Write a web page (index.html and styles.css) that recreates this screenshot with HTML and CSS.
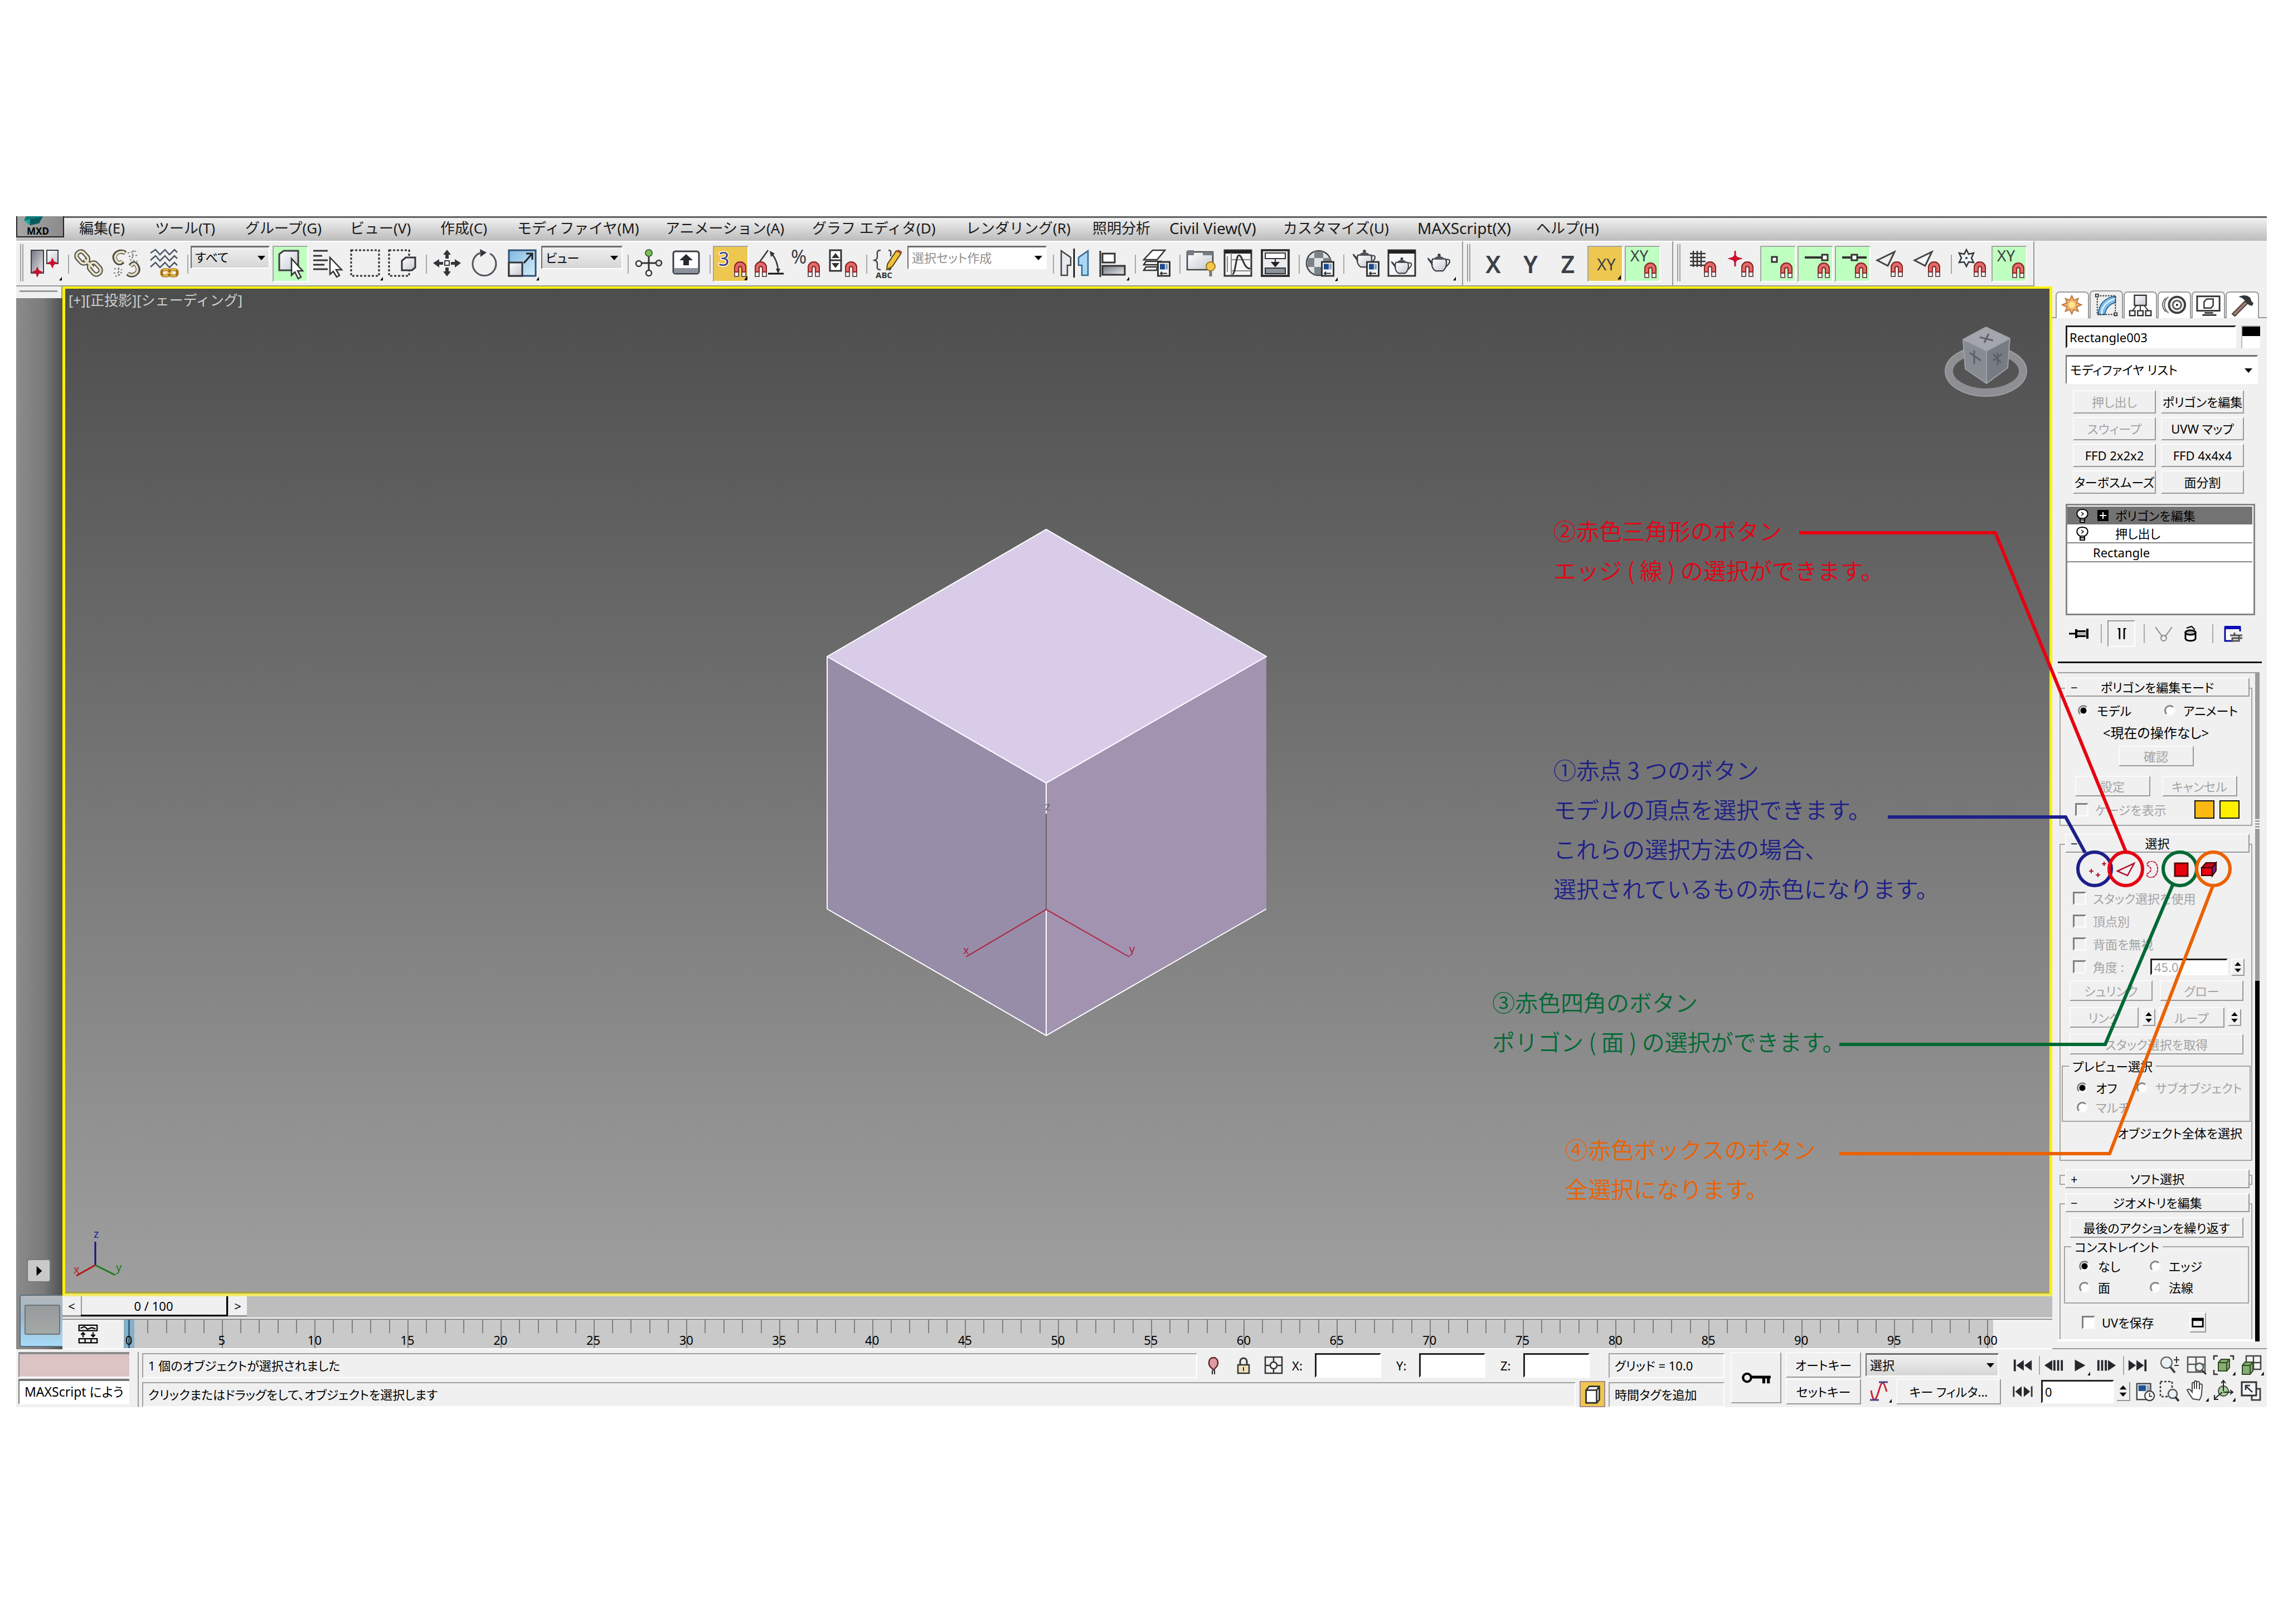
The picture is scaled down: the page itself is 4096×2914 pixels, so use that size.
FILE: index.html
```html
<!DOCTYPE html>
<html lang="ja">
<head>
<meta charset="utf-8">
<title>MXD</title>
<link rel="stylesheet" href="styles.css">
</head>
<body>
<svg class="defs" aria-hidden="true">
  <defs>
    <linearGradient id="gSteel" x1="0" y1="0" x2="1" y2="1"><stop offset="0" stop-color="#6f747c"/><stop offset="1" stop-color="#e8eaee"/></linearGradient>
    <linearGradient id="gPale" x1="0" y1="0" x2="1" y2="1"><stop offset="0" stop-color="#fff"/><stop offset="1" stop-color="#c3c8d0"/></linearGradient>
    <linearGradient id="gBlue" x1="0" y1="0" x2="1" y2="1"><stop offset="0" stop-color="#7fb8e0"/><stop offset="1" stop-color="#d6edfb"/></linearGradient>
    <symbol id="magnet" viewBox="0 0 24 28"><path d="M2 27V11a10 10 0 0 1 20 0V27H15V12a3 3 0 0 0-6 0V27Z" fill="#fff" stroke="#6a5a5a" stroke-width="2"/><path d="M2 19V11a10 10 0 0 1 20 0v8H15V12a3 3 0 0 0-6 0v7Z" fill="#e26a6a" stroke="#8a2424" stroke-width="2"/></symbol>
    <symbol id="fly" viewBox="0 0 6 8"><path d="M6 0V8H0Z" fill="#000"/></symbol>
    <symbol id="teapot" viewBox="0 0 50 38"><path d="M12 12H38C42 22 38 32 32 36H18C11 32 8 22 12 12Z" fill="url(#gPale)" stroke="#3c3f44" stroke-width="2.5"/><path d="M12 20L2 10M12 24L3 12M38 14C48 10 50 18 38 28" fill="none" stroke="#3c3f44" stroke-width="2.5"/><path d="M15 11C20 5 30 5 35 11Z" fill="#4a4e55"/><circle cx="25" cy="4" r="3" fill="#3c3f44"/></symbol>
    <symbol id="sheet" viewBox="0 0 24 28"><rect x="1.500" y="1.500" width="21" height="25" fill="#f4f7fa" stroke="#333" stroke-width="3"/><rect x="5" y="5" width="9" height="10" fill="#1d4c8c"/><rect x="15" y="5" width="4" height="10" fill="#8aa0bb"/><path d="M6 22h12M9 19l-3 3 3 3" stroke="#333" stroke-width="2" fill="none"/></symbol>
    <symbol id="bulb" viewBox="0 0 24 30"><path d="M8 20C-1 15 1 4 12 4S25 15 16 20Z" fill="#fff" stroke="#000" stroke-width="2"/><path d="M8 20h8v7H8ZM8 23h8" fill="#fff" stroke="#000" stroke-width="2"/><path d="M10 9l4 3-4 3" fill="none" stroke="#000" stroke-width="1.500"/></symbol>
    <symbol id="updown" viewBox="0 0 24 30"><path d="M12 4L19 12H5ZM12 26L19 18H5Z" fill="#000"/></symbol>
  </defs>
</svg>

<main class="app">
  <header class="menubar">
    <button class="logo" type="button"><svg viewBox="0 0 44 20"><path d="M4 0H38L30 14 12 18 0 8Z" fill="#0d7a78"/><path d="M12 6L36 2 30 14 12 18Z" fill="#075a5c"/><path d="M0 8L12 6V18Z" fill="#1ba39c"/></svg><span>MXD</span></button>
    <nav class="menus">
      <a href="#">編集(E)</a><a href="#">ツール(T)</a><a href="#">グループ(G)</a><a href="#">ビュー(V)</a><a href="#">作成(C)</a><a href="#">モディファイヤ(M)</a><a href="#">アニメーション(A)</a><a href="#">グラフ エディタ(D)</a><a href="#">レンダリング(R)</a><a href="#">照明分析</a><a href="#" class="latin">Civil View(V)</a><a href="#">カスタマイズ(U)</a><a href="#" class="latin">MAXScript(X)</a><a href="#">ヘルプ(H)</a>
    </nav>
  </header>

  <div class="toolbars">
    <section class="bar bar-main">
      <i class="grip"></i>
      <button class="tool" type="button" aria-label="整列"><svg viewBox="0 0 64 64"><rect x="8" y="7" width="22" height="41" fill="url(#gSteel)" stroke="#3c3f44" stroke-width="2"/><rect x="36" y="7" width="20" height="24" fill="url(#gPale)" stroke="#3c3f44" stroke-width="2"/><path d="M19 36l3 7 7 3-7 3-3 7-3-7-7-3 7-3ZM46 20l3 7 7 3-7 3-3 7-3-7-7-3 7-3Z" fill="#c8102e"/><use href="#fly" x="58" y="54" width="5" height="8"/></svg></button>
      <i class="sep"></i>
      <button class="tool" type="button" aria-label="リンク"><svg viewBox="0 0 64 64"><g fill="none"><g stroke="#4b4a42" stroke-width="8"><rect x="12" y="9" width="15" height="23" rx="7" transform="rotate(-42 19 20)"/><rect x="35" y="28" width="15" height="23" rx="7" transform="rotate(-42 43 40)"/><path d="M23 23L39 38"/></g><g stroke="#e8e2c8" stroke-width="4"><rect x="12" y="9" width="15" height="23" rx="7" transform="rotate(-42 19 20)"/><rect x="35" y="28" width="15" height="23" rx="7" transform="rotate(-42 43 40)"/><path d="M23 23L39 38"/></g></g></svg></button>
      <button class="tool" type="button" aria-label="リンク解除"><svg viewBox="0 0 64 64"><g fill="none"><path d="M30 12C22 6 8 12 11 22S22 31 25 27M34 49C42 56 56 48 52 38S43 30 39 35" stroke="#4b4a42" stroke-width="8"/><path d="M29 12C22 7 9 13 12 22S21 30 24 27M35 49C42 55 55 48 51 38S43 31 40 35" stroke="#e8e2c8" stroke-width="4"/><path d="M34 12l18-4M36 18l18-2M38 24l14 3M44 7l-2 18M10 40l14 2M9 48l16-1M12 54l10-4M18 38v16" stroke="#777" stroke-width="2" stroke-dasharray="3 3"/></g></svg></button>
      <button class="tool" type="button" aria-label="スペースワープ"><svg viewBox="0 0 64 64"><path d="M8 12l9-6 8 9 9-9 8 9 9-9 5 5M8 25l9-8 8 9 9-9 8 9 9-9 5 5M8 37l9-8 8 9 9-9 8 9 9-9 5 5" fill="none" stroke="#4a5568" stroke-width="2.500"/><rect x="28" y="42" width="14" height="11" rx="4" fill="none" stroke="#a87412" stroke-width="5"/><rect x="42" y="42" width="14" height="11" rx="4" fill="none" stroke="#a87412" stroke-width="5"/><path d="M30 42h10M44 42h10M30 53h10M44 53h10M36 48h12" stroke="#f3c64b" stroke-width="2"/></svg></button>
      <i class="sep"></i>
      <span class="pick w-filter"><select aria-label="選択フィルタ"><option>すべて</option></select></span>
      <button class="tool on" type="button" aria-label="選択"><svg viewBox="0 0 64 64"><path d="M12 14L20 8H46V38L40 43H12Z" fill="url(#gPale)" stroke="#3c3f44" stroke-width="3"/><path d="M34 22V52L40 46 46 58 51 55 45 44H54Z" fill="#fff" stroke="#333" stroke-width="2.500"/></svg></button>
      <button class="tool" type="button" aria-label="名前による選択"><svg viewBox="0 0 64 64"><path d="M6 8h26M6 17h16M6 25h26M6 33h20M6 41h26" stroke="#333" stroke-width="3"/><path d="M36 20V50L42 45 48 55 53 52 47 42H57Z" fill="#fff" stroke="#333" stroke-width="2.500"/></svg></button>
      <button class="tool" type="button" aria-label="矩形選択"><svg viewBox="0 0 64 64"><rect x="7" y="7" width="50" height="46" fill="none" stroke="#333" stroke-width="3" stroke-dasharray="4 3"/><use href="#fly" x="59" y="54" width="5" height="8"/></svg></button>
      <button class="tool" type="button" aria-label="交差"><svg viewBox="0 0 64 64"><rect x="8" y="7" width="36" height="46" fill="none" stroke="#333" stroke-width="3" stroke-dasharray="4 3"/><path d="M31 26L38 20H55V38L49 43H31Z" fill="url(#gPale)" stroke="#333" stroke-width="3"/></svg></button>
      <i class="sep"></i>
      <button class="tool" type="button" aria-label="移動"><svg viewBox="0 0 64 64"><path d="M32 6l7 9h-4v7h-6v-7h-4ZM32 54l7-9h-4v-7h-6v7h-4ZM7 30l11-7v5h7v5h-7v5ZM57 30l-11-7v5h-7v5h7v5Z" fill="#33363b"/><rect x="28" y="26" width="8" height="8" fill="#fff" stroke="#33363b" stroke-width="2"/></svg></button>
      <button class="tool" type="button" aria-label="回転"><svg viewBox="0 0 64 64"><path d="M42 13A21 21 0 1 1 24 12" fill="none" stroke="#50555c" stroke-width="3"/><path d="M24 5L36 11 25 19Z" fill="#33363b"/></svg></button>
      <button class="tool" type="button" aria-label="スケール"><svg viewBox="0 0 64 64"><rect x="9" y="7" width="48" height="46" fill="url(#gBlue)" stroke="#2d4f74" stroke-width="3"/><rect x="9" y="29" width="24" height="24" fill="url(#gPale)" stroke="#333" stroke-width="3"/><path d="M36 30L50 14M40 13H51V24" fill="none" stroke="#222" stroke-width="3"/><use href="#fly" x="58" y="54" width="5" height="8"/></svg></button>
      <span class="pick w-coord"><select aria-label="参照座標系"><option>ビュー</option></select></span>
      <i class="sep"></i>
      <button class="tool" type="button" aria-label="基点"><svg viewBox="0 0 64 64"><path d="M32 12V50M12 30H52" stroke="#333" stroke-width="3"/><circle cx="32" cy="12" r="6" fill="#7bbf5a" stroke="#3c6b2c" stroke-width="2"/><circle cx="14" cy="31" r="5" fill="#fff" stroke="#333" stroke-width="2.500"/><circle cx="50" cy="30" r="5" fill="#dfe3e8" stroke="#333" stroke-width="2.500"/><circle cx="32" cy="48" r="5" fill="#fff" stroke="#333" stroke-width="2.500"/></svg></button>
      <button class="tool" type="button" aria-label="キーボード"><svg viewBox="0 0 64 64"><rect x="9" y="9" width="46" height="40" rx="4" fill="#fff" stroke="#3c3f44" stroke-width="3"/><rect x="10" y="39" width="44" height="9" fill="#8d939c"/><path d="M32 14L44 25H37V34H27V25H20Z" fill="#26292e"/></svg></button>
      <i class="sep"></i>
      <button class="tool on-amber" type="button" aria-label="スナップ"><svg viewBox="0 0 64 64"><text x="10" y="35" class="glyph glyph-halo">3</text><use href="#magnet" x="37" y="27" width="24" height="28"/><use href="#fly" x="56" y="52" width="6" height="9"/></svg></button>
      <button class="tool" type="button" aria-label="角度スナップ"><svg viewBox="0 0 64 64"><path d="M14 32L32 7M36 11C46 20 50 34 50 46" fill="none" stroke="#333" stroke-width="2.500"/><path d="M35 8l9 5-7 6ZM50 49l-4-9h8Z" fill="#333"/><path d="M32 49H60" stroke="#111" stroke-width="3"/><use href="#magnet" x="7" y="27" width="24" height="28"/></svg></button>
      <button class="tool" type="button" aria-label="パーセントスナップ"><svg viewBox="0 0 64 64"><text x="6" y="31" class="glyph">%</text><use href="#magnet" x="35" y="27" width="24" height="28"/></svg></button>
      <button class="tool" type="button" aria-label="スピナースナップ"><svg viewBox="0 0 64 64"><path d="M9 7H29V44H9ZM9 25H29" fill="#fff" stroke="#333" stroke-width="3"/><path d="M19 12L26 21H12ZM19 39L26 30H12Z" fill="#333"/><use href="#magnet" x="35" y="27" width="24" height="28"/></svg></button>
      <i class="sep"></i>
      <button class="tool" type="button" aria-label="選択セット編集"><svg viewBox="0 0 64 64"><path d="M20 7C12 7 14 12 14 18 14 23 12 24 9 25 12 26 14 27 14 32 14 38 12 42 20 42M34 7C40 7 38 12 38 18M38 30C38 38 40 42 34 42" fill="none" stroke="#444" stroke-width="2.500"/><path d="M32 32L48 8 57 12 41 36 31 42Z" fill="#f0c23c" stroke="#5c4310" stroke-width="2"/><path d="M48 8L52 6 58 9 57 12Z" fill="#b44"/><text x="11" y="57" class="glyph-abc">ABC</text></svg></button>
      <span class="pick w-sets light"><select aria-label="名前付き選択セット"><option>選択セット作成</option></select></span>
      <i class="sep"></i>
      <button class="tool" type="button" aria-label="ミラー"><svg viewBox="0 0 64 64"><path d="M9 8L26 20V34H20V52H9Z" fill="#e6eaef" stroke="#444" stroke-width="2.500"/><path d="M32 4V56" stroke="#000" stroke-width="2.500"/><path d="M57 8L40 20V34H46V52H57Z" fill="#a9d6f2" stroke="#336a94" stroke-width="2.500"/></svg></button>
      <button class="tool" type="button" aria-label="位置合わせ"><svg viewBox="0 0 64 64"><path d="M12 8V55" stroke="#333" stroke-width="3"/><rect x="16" y="13" width="22" height="16" fill="#fff" stroke="#333" stroke-width="3"/><rect x="16" y="35" width="40" height="16" fill="url(#gSteel)" stroke="#333" stroke-width="3"/><use href="#fly" x="59" y="54" width="5" height="8"/></svg></button>
      <i class="sep"></i>
      <button class="tool" type="button" aria-label="レイヤ"><svg viewBox="0 0 64 64"><path d="M10 24L26 7H48L34 24ZM10 33L14 27H40L34 33ZM10 43L14 37H36L32 43Z" fill="#fff" stroke="#333" stroke-width="2.500"/><use href="#sheet" x="34" y="26" width="24" height="29"/></svg></button>
      <i class="sep"></i>
      <button class="tool" type="button" aria-label="グラファイト"><svg viewBox="0 0 64 64"><rect x="8" y="10" width="46" height="32" fill="url(#gPale)" stroke="#444" stroke-width="2.500"/><path d="M8 7H20V16H8ZM36 10H54V16H36Z" fill="#777c84"/><circle cx="50" cy="36" r="8" fill="#f2c84c" stroke="#a5781a" stroke-width="2"/><path d="M50 44V54" stroke="#777" stroke-width="5"/></svg></button>
      <button class="tool" type="button" aria-label="カーブエディタ"><svg viewBox="0 0 64 64"><rect x="8" y="7" width="48" height="46" fill="#f4f5f7" stroke="#333" stroke-width="3"/><path d="M8 10H56" stroke="#222" stroke-width="6"/><path d="M20 12V52M20 24H56M20 44H56M13 18v28" stroke="#888" stroke-width="2"/><path d="M22 50C28 50 28 16 34 16S42 40 54 40" fill="none" stroke="#333" stroke-width="3"/></svg></button>
      <button class="tool" type="button" aria-label="スケマティック"><svg viewBox="0 0 64 64"><rect x="8" y="7" width="48" height="46" fill="#e9ebee" stroke="#333" stroke-width="4"/><rect x="14" y="12" width="36" height="10" fill="#fff" stroke="#333" stroke-width="2"/><rect x="14" y="39" width="36" height="10" fill="#8d939c" stroke="#333" stroke-width="2"/><path d="M32 22V30M26 29H38L32 36Z" fill="#222" stroke="#222" stroke-width="2"/></svg></button>
      <i class="sep"></i>
      <button class="tool" type="button" aria-label="マテリアル"><svg viewBox="0 0 64 64"><circle cx="30" cy="30" r="22" fill="#dfe2e6" stroke="#444" stroke-width="2.500"/><path d="M22 9H38V21H22ZM10 21H22V37H10ZM38 21H51V37H38ZM22 37H38V51H22Z" fill="#7c828a"/><use href="#sheet" x="34" y="26" width="24" height="29"/><use href="#fly" x="59" y="55" width="5" height="8"/></svg></button>
      <i class="sep"></i>
      <button class="tool" type="button" aria-label="レンダリング設定"><svg viewBox="0 0 64 64"><use href="#teapot" x="7" y="5" width="50" height="34"/><use href="#sheet" x="35" y="26" width="24" height="29"/></svg></button>
      <button class="tool" type="button" aria-label="レンダリングフレーム"><svg viewBox="0 0 64 64"><rect x="8" y="7" width="48" height="46" fill="#f4f5f7" stroke="#333" stroke-width="3"/><path d="M8 10H56" stroke="#222" stroke-width="6"/><use href="#teapot" x="11" y="19" width="42" height="31"/></svg></button>
      <button class="tool" type="button" aria-label="レンダリング"><svg viewBox="0 0 64 64"><use href="#teapot" x="8" y="12" width="48" height="34"/><use href="#fly" x="57" y="54" width="5" height="8"/></svg></button>
    </section>
    <section class="bar bar-axis">
      <i class="grip"></i>
      <button class="tool axis" type="button">X</button>
      <button class="tool axis" type="button">Y</button>
      <button class="tool axis" type="button">Z</button>
      <button class="tool on-amber" type="button"><span class="xy">XY</span><svg class="corner" viewBox="0 0 6 8"><path d="M6 0V8H0Z"/></svg></button>
      <button class="tool on" type="button" aria-label="XY スナップ"><svg viewBox="0 0 64 64"><text x="10" y="27" class="glyph-xy">XY</text><use href="#magnet" x="34" y="29" width="24" height="28"/></svg></button>
    </section>
    <section class="bar">
      <i class="grip"></i>
      <button class="tool" type="button" aria-label="グリッド"><svg viewBox="0 0 64 64"><path d="M14 8V37M21 8V37M28 8V37M8 13H36M8 20H36M8 27H36M8 34H34" stroke="#333" stroke-width="2.500"/><use href="#magnet" x="32" y="27" width="24" height="28"/></svg></button>
      <button class="tool" type="button" aria-label="基点スナップ"><svg viewBox="0 0 64 64"><path d="M22 8V36" stroke="#c8102e" stroke-width="3"/><path d="M22 14l4 5 10 3-10 3-4 5-4-5-10-3 10-3Z" fill="#c8102e"/><use href="#magnet" x="32" y="27" width="24" height="28"/></svg></button>
      <button class="tool on" type="button" aria-label="頂点"><svg viewBox="0 0 64 64"><rect x="21" y="19" width="9" height="9" fill="#fff" stroke="#333" stroke-width="3"/><use href="#magnet" x="35" y="29" width="24" height="28"/></svg></button>
      <button class="tool on" type="button" aria-label="端点"><svg viewBox="0 0 64 64"><path d="M13 20H44" stroke="#333" stroke-width="4"/><rect x="44" y="15" width="10" height="10" fill="#fff" stroke="#333" stroke-width="3"/><use href="#magnet" x="35" y="29" width="24" height="28"/></svg></button>
      <button class="tool on" type="button" aria-label="中点"><svg viewBox="0 0 64 64"><path d="M13 20H57" stroke="#333" stroke-width="4"/><rect x="30" y="15" width="10" height="10" fill="#fff" stroke="#333" stroke-width="3"/><use href="#magnet" x="35" y="29" width="24" height="28"/></svg></button>
      <button class="tool" type="button" aria-label="エッジ"><svg viewBox="0 0 64 64"><path d="M9 25L40 10 28 35Z" fill="none" stroke="#444" stroke-width="3"/><use href="#magnet" x="32" y="27" width="24" height="28"/></svg></button>
      <button class="tool" type="button" aria-label="面"><svg viewBox="0 0 64 64"><path d="M9 25L40 10 28 35Z" fill="#f6f7f9" stroke="#444" stroke-width="3"/><use href="#magnet" x="32" y="27" width="24" height="28"/></svg></button>
      <i class="sep"></i>
      <button class="tool" type="button" aria-label="フリーズ"><svg viewBox="0 0 64 64"><path d="M22 6l4 8 9-2-4 9 4 8-9-1-4 8-4-8-9 1 4-8-4-9 9 2Z" fill="#eef3f8" stroke="#333" stroke-width="2.500"/><circle cx="22" cy="21" r="2" fill="#333"/><use href="#magnet" x="34" y="27" width="24" height="28"/></svg></button>
      <button class="tool on" type="button" aria-label="XY 拘束"><svg viewBox="0 0 64 64"><text x="10" y="27" class="glyph-xy">XY</text><use href="#magnet" x="36" y="29" width="24" height="28"/></svg></button>
    </section>
  </div>

  <div class="workspace">
    <aside class="rail">
      <div class="rail-head"></div>
      <button class="rail-play" type="button" aria-label="展開"><svg viewBox="0 0 40 40"><path d="M16 11L26 20 16 29Z" fill="#000"/></svg></button>
      <div class="rail-tab"><span></span></div>
    </aside>

    <div class="stage">
      <section class="viewport">
        <p class="vp-label">[+][正投影][シェーディング]</p>
        <svg class="scene" viewBox="117 518 3560 1801" aria-hidden="true">
          <path d="M1877 949L2272 1177 1877 1404 1484 1177Z" fill="#d9cce9"/>
          <path d="M1484 1177L1877 1404V1857L1484 1630Z" fill="#978da9"/>
          <path d="M2272 1177L1877 1404V1857L2272 1630Z" fill="#a293b1"/>
          <path d="M1484 1630V1177L1877 949 2272 1177 1877 1404 1484 1177M1484 1630L1877 1857 2272 1630M1877 1404V1459M1877 1632V1857" fill="none" stroke="#fff" stroke-width="2"/>
          <path d="M1877 1459V1632" stroke="#666" stroke-width="2"/>
          <path d="M1733 1716L1877 1631 2026 1716" fill="none" stroke="#b0203c" stroke-width="2"/>
          <text x="1728" y="1711" class="ax" fill="#b0203c">x</text><text x="2026" y="1709" class="ax" fill="#b0203c">y</text><text x="1875" y="1453" class="ax" fill="#666">z</text>
          <path d="M171 2269V2227" stroke="#10108a" stroke-width="3"/><path d="M171 2269L137 2288" stroke="#b01818" stroke-width="3"/><path d="M171 2269L207 2287" stroke="#1d7a1d" stroke-width="3"/>
          <text x="168" y="2220" class="ax" fill="#1a1aaa">z</text><text x="132" y="2284" class="ax" fill="#c02020">x</text><text x="208" y="2280" class="ax" fill="#1d7a1d">y</text>
          <ellipse cx="3563" cy="665" rx="66" ry="38" fill="none" stroke="#8d8f92" stroke-width="14"/>
          <ellipse cx="3563" cy="665" rx="73" ry="45" fill="none" stroke="#9c9ea1" stroke-width="2"/>
          <path d="M3563 586L3606 606 3564 629 3522 608Z" fill="#a3a7ad"/><path d="M3522 608L3564 629V687L3526 661Z" fill="#878b92"/><path d="M3606 606L3564 629V687L3602 659Z" fill="#777b82"/>
          <path d="M3563 586L3606 606 3602 659 3564 687 3526 661 3522 608ZM3522 608L3564 629 3606 606M3564 629V687" fill="none" stroke="#9da1a7" stroke-width="2"/>
          <path d="M3552 604l24 6M3568 598l-8 16M3534 632l20 14M3542 628v24M3576 646l16-12M3584 632v22M3576 634l14 16" stroke="#5d6168" stroke-width="3"/>
        </svg>
      </section>
      <div class="slider"><button type="button">&lt;</button><button class="thumb" type="button">0 / 100</button><button type="button">&gt;</button></div>
      <div class="timeline">
        <button class="curve-btn" type="button" aria-label="ミニカーブエディタ"><svg viewBox="0 0 40 40"><path d="M2 2H38V13H2ZM2 29H38V37H2ZM14 29V37M26 29V37M5 8l8-3 6 5 8-3 8 2M10 26V18M6 21l4-4 4 4M30 16V25M26 21l4 4 4-4" fill="none" stroke="#000" stroke-width="2.500"/></svg></button>
        <ol class="ruler"><li class="now"><span>0</span></li><li><span>5</span></li><li><span>10</span></li><li><span>15</span></li><li><span>20</span></li><li><span>25</span></li><li><span>30</span></li><li><span>35</span></li><li><span>40</span></li><li><span>45</span></li><li><span>50</span></li><li><span>55</span></li><li><span>60</span></li><li><span>65</span></li><li><span>70</span></li><li><span>75</span></li><li><span>80</span></li><li><span>85</span></li><li><span>90</span></li><li><span>95</span></li><li class="last"><span>100</span></li></ol>
      </div>
    </div>

    <aside class="panel">
      <div class="tabs">
        <button type="button" aria-label="作成"><svg viewBox="0 0 60 48"><path d="M28 6l4 8 8-3-3 8 9 4-9 4 3 8-8-3-4 8-4-8-8 3 3-8-9-4 9-4-3-8 8 3Z" fill="#f0b070" stroke="#b8783e" stroke-width="2"/><circle cx="28" cy="23" r="6" fill="#ffe98a"/></svg></button>
        <button type="button" class="current" aria-label="修正"><svg viewBox="0 0 60 48"><path d="M14 42C14 24 26 10 46 8V20C36 22 28 30 26 42Z" fill="#7cbcea" stroke="#2f6796" stroke-width="2"/><path d="M20 42C20 28 30 16 46 13" fill="none" stroke="#dff1fd" stroke-width="3"/><path d="M12 7H46V42H12Z" fill="none" stroke="#333" stroke-width="2" stroke-dasharray="3 2"/><path d="M9 4h5v5H9ZM44 39h5v5h-5Z" fill="#fff" stroke="#333" stroke-width="2"/></svg></button>
        <button type="button" aria-label="階層"><svg viewBox="0 0 60 48"><rect x="18" y="5" width="22" height="19" fill="url(#gPale)" stroke="#333" stroke-width="2.500"/><path d="M29 24V34M22 24L14 34M36 24L44 34" stroke="#333" stroke-width="2"/><path d="M9 34h10v9H9ZM24 34h10v9H24ZM39 34h10v9H39Z" fill="#fff" stroke="#333" stroke-width="2.500"/></svg></button>
        <button type="button" aria-label="モーション"><svg viewBox="0 0 60 48"><circle cx="34" cy="23" r="15" fill="#eee" stroke="#3a3d42" stroke-width="4"/><circle cx="34" cy="23" r="8" fill="#fff" stroke="#555" stroke-width="3"/><circle cx="34" cy="23" r="2"/><path d="M18 8C8 16 8 30 18 38M13 10C5 18 5 28 13 36" fill="none" stroke="#666" stroke-width="2"/></svg></button>
        <button type="button" aria-label="表示"><svg viewBox="0 0 60 48"><rect x="8" y="7" width="42" height="27" fill="#fff" stroke="#333" stroke-width="3"/><path d="M21 17l5-5h12v12l-4 5H21Z" fill="#fff" stroke="#333" stroke-width="2.500"/><path d="M22 38H38M18 42H44" stroke="#333" stroke-width="3"/></svg></button>
        <button type="button" aria-label="ユーティリティ"><svg viewBox="0 0 60 48"><path d="M10 40L34 16 39 20 15 44Z" fill="#a07c74" stroke="#4b3a36" stroke-width="2"/><path d="M22 8C30 4 38 4 44 10L46 16 50 20 47 25 41 23 34 15C30 11 28 9 22 8Z" fill="#33363b"/></svg></button>
      </div>

      <div class="name-row"><input type="text" value="Rectangle003" aria-label="オブジェクト名"><button class="swatch-name" type="button" aria-label="カラー"></button></div>
      <span class="pick w-mod"><select aria-label="モディファイヤ"><option>モディファイヤ リスト</option></select></span>
      <div class="mods">
        <button type="button" disabled>押し出し</button><button type="button">ポリゴンを編集</button>
        <button type="button" disabled>スウィープ</button><button type="button">UVW マップ</button>
        <button type="button">FFD 2x2x2</button><button type="button">FFD 4x4x4</button>
        <button type="button">ターボスムーズ</button><button type="button">面分割</button>
      </div>
      <ul class="stack">
        <li class="sel"><svg class="lamp"><use href="#bulb"/></svg><svg class="plus" viewBox="0 0 20 20"><rect width="20" height="20"/><path d="M4 10H16M10 4V16" stroke="#fff" stroke-width="2"/></svg><span>ポリゴンを編集</span></li>
        <li><svg class="lamp"><use href="#bulb"/></svg><i class="plus"></i><span>押し出し</span></li>
        <li class="base"><span>Rectangle</span></li>
      </ul>
      <div class="stack-tools">
        <button type="button" aria-label="ピン"><svg viewBox="0 0 48 48"><path d="M6 24H18" stroke="#000" stroke-width="3"/><path d="M19 16V32M20 20H36M20 28H36M39 15V33" stroke="#000" stroke-width="4"/><path d="M21 21H37V27H21Z" fill="#bbb"/></svg></button>
        <i></i>
        <button type="button" class="pressed" aria-label="最終結果"><svg viewBox="0 0 48 48"><path d="M16 13h6v22h-3V17ZM34 13h-6v22h3V17Z" fill="#000"/></svg></button>
        <i></i>
        <button type="button" aria-label="個別化"><svg viewBox="0 0 48 48"><path d="M9 12L22 30M39 12L26 30" stroke="#888" stroke-width="2"/><circle cx="24" cy="32" r="5" fill="none" stroke="#888" stroke-width="2"/></svg></button>
        <button type="button" aria-label="削除"><svg viewBox="0 0 48 48"><path d="M15 22V33C17 38 31 38 33 33V22Z" fill="#fff" stroke="#000" stroke-width="3"/><ellipse cx="24" cy="22" rx="9" ry="4" fill="#bbb" stroke="#000" stroke-width="3"/><path d="M17 14l9-3 6 6" fill="none" stroke="#000" stroke-width="2"/></svg></button>
        <i></i>
        <button type="button" aria-label="構成"><svg viewBox="0 0 48 48"><path d="M11 12H38V20M11 12V37H26" fill="#fff" stroke="#0b0b9c" stroke-width="3"/><path d="M10 13H39" stroke="#0b0bb8" stroke-width="6"/><path d="M20 27H42M28 22v5M36 27v10H24v-5h18" fill="none" stroke="#555" stroke-width="3"/></svg></button>
      </div>
      <hr class="divider">

      <div class="rollouts">
        <div class="rolls">
          <section class="rollout">
            <h3><span>−</span>ポリゴンを編集モード</h3>
            <div class="line two"><label><input type="radio" name="mode" checked>モデル</label><label><input type="radio" name="mode">アニメート</label></div>
            <p class="op">&lt;現在の操作なし&gt;</p>
            <div class="acts"><button type="button" disabled>確認</button></div>
            <div class="acts pair"><button type="button" disabled>設定</button><button type="button" disabled>キャンセル</button></div>
            <div class="line cage"><label class="off"><input type="checkbox" disabled>ケージを表示</label><button class="chip amber" type="button" aria-label="ケージ色"></button><button class="chip yellow" type="button" aria-label="選択ケージ色"></button></div>
          </section>

          <section class="rollout">
            <h3><span>−</span>選択</h3>
            <div class="subs">
              <button type="button" aria-label="頂点"><svg viewBox="0 0 34 30"><path d="M1 18h8M5 14v8M24 5h8M28 1v8M13 25h8M17 21v8" stroke="#b0102c" stroke-width="2"/></svg></button>
              <button type="button" aria-label="エッジ"><svg viewBox="0 0 34 30"><path d="M2 18L32 4 20 26Z" fill="none" stroke="#b0102c" stroke-width="2.500"/></svg></button>
              <button type="button" aria-label="境界"><svg viewBox="0 0 34 30"><path d="M6 4C9-2 24-2 24 14S10 33 5 26C3 21 12 22 12 15S2 10 6 4Z" fill="none" stroke="#c01838" stroke-width="2" stroke-dasharray="5 1"/></svg></button>
              <button type="button" aria-label="ポリゴン"><svg viewBox="0 0 34 30"><rect x="5" y="4" width="23" height="23" fill="#e8000c" stroke="#5a0a0a" stroke-width="3"/></svg></button>
              <button type="button" aria-label="要素"><svg viewBox="0 0 34 30"><path d="M3 12L11 3H29L22 12Z" fill="#c4001a" stroke="#300" stroke-width="2"/><path d="M22 12L29 3V17L22 27Z" fill="#7a1c8a" stroke="#300" stroke-width="2"/><rect x="3" y="12" width="19" height="14" fill="#ee0010" stroke="#300" stroke-width="2"/></svg></button>
            </div>
            <div class="checks">
              <label class="off"><input type="checkbox" disabled>スタック選択を使用</label>
              <label class="off"><input type="checkbox" disabled>頂点別</label>
              <label class="off"><input type="checkbox" disabled>背面を無視</label>
              <div class="angle"><label class="off"><input type="checkbox" disabled>角度 :</label><input type="text" value="45.0" disabled aria-label="角度"><button class="spin" type="button" aria-label="増減"><svg><use href="#updown"/></svg></button></div>
            </div>
            <div class="grid-a"><button type="button" disabled>シュリンク</button><button type="button" disabled>グロー</button></div>
            <div class="grid-b"><button type="button" disabled>リング</button><button class="spin" type="button" aria-label="リング増減"><svg><use href="#updown"/></svg></button><button type="button" disabled>ループ</button><button class="spin" type="button" aria-label="ループ増減"><svg><use href="#updown"/></svg></button></div>
            <div class="grid-c"><button type="button" disabled>スタック選択を取得</button></div>
            <fieldset class="preview"><legend>プレビュー選択</legend>
              <label><input type="radio" name="pv" checked>オフ</label><label class="off"><input type="radio" name="pv">サブオブジェクト</label><label class="off"><input type="radio" name="pv">マルチ</label>
            </fieldset>
            <p class="whole">オブジェクト全体を選択</p>
          </section>

          <section class="rollout closed"><h3><span>+</span>ソフト選択</h3></section>

          <section class="rollout open-end">
            <h3><span>−</span>ジオメトリを編集</h3>
            <div class="grid-c repeat"><button type="button">最後のアクションを繰り返す</button></div>
            <fieldset class="constraint"><legend>コンストレイント</legend>
              <label><input type="radio" name="cs" checked>なし</label><label><input type="radio" name="cs">エッジ</label><label><input type="radio" name="cs">面</label><label><input type="radio" name="cs">法線</label>
            </fieldset>
            <div class="uv"><label><input type="checkbox">UVを保存</label><button type="button" aria-label="設定"><svg viewBox="0 0 28 34"><path d="M4 10H24V25H4Z" fill="none" stroke="#000" stroke-width="3"/><path d="M3 11H25" stroke="#000" stroke-width="6"/></svg></button></div>
          </section>
        </div>
        <div class="scroll"><i></i></div>
      </div>
    </aside>
  </div>

  <footer class="status">
    <div class="listener"><div class="pink"></div><input type="text" value="MAXScript によう" aria-label="MAXScript"></div>
    <div class="info">
      <div class="info-row">
        <p class="msg">1 個のオブジェクトが選択されました</p>
        <div class="coords">
          <svg viewBox="0 0 34 34"><path d="M14 22C6 16 8 3 17 3S28 16 20 22L18 26Z" fill="#e39aa4" stroke="#5a2a30" stroke-width="2.500"/><path d="M15 26v7M19 26v7" stroke="#222" stroke-width="2"/></svg>
          <svg viewBox="0 0 34 34"><path d="M11 16V10C11 2 23 2 23 10V16" fill="none" stroke="#333" stroke-width="3"/><rect x="7" y="16" width="20" height="15" fill="#f0e2b8" stroke="#333" stroke-width="2.500"/><path d="M17 20v7" stroke="#333" stroke-width="2"/></svg>
          <svg viewBox="0 0 34 34"><path d="M2 2H32V31H2ZM17 2V10M17 23V31M2 17H10M24 17H32" fill="none" stroke="#333" stroke-width="2.500"/><circle cx="17" cy="17" r="6" fill="#fff" stroke="#333" stroke-width="2.500"/></svg>
          <label>X:<input type="text"></label><label>Y:<input type="text"></label><label>Z:<input type="text"></label>
        </div>
        <p class="cell">グリッド = 10.0</p>
      </div>
      <div class="info-row">
        <p class="msg">クリックまたはドラッグをして、オブジェクトを選択します</p>
        <button class="iso" type="button" aria-label="分離"><svg viewBox="0 0 44 44"><path d="M10 14L16 7H35V32L30 38H10ZM10 14H30V38M30 14L35 7" fill="#fff" stroke="#333" stroke-width="3"/></svg></button>
        <p class="cell">時間タグを追加</p>
      </div>
    </div>
    <button class="key" type="button" aria-label="キー設定"><svg viewBox="0 0 60 40"><circle cx="14" cy="20" r="7" fill="none" stroke="#000" stroke-width="4"/><path d="M21 19H55M43 19V30M51 19V30" stroke="#000" stroke-width="5" fill="none"/></svg></button>
    <div class="keys"><button type="button">オートキー</button><button type="button">セットキー</button></div>
    <div class="filters">
      <span class="pick w-sel"><select aria-label="キーセット"><option>選択</option></select></span>
      <div><button class="bare" type="button" aria-label="接線"><svg viewBox="0 0 44 44"><path d="M6 20C10 44 14 40 20 20S28 2 34 22" fill="none" stroke="#cc2233" stroke-width="3"/><path d="M4 37H20M20 5H36" stroke="#4a3f86" stroke-width="3"/><use href="#fly" x="38" y="35" width="5" height="7"/></svg></button><button class="kf" type="button">キー フィルタ...</button></div>
    </div>
    <div class="transport">
      <div class="t-row">
        <button type="button" aria-label="先頭"><svg viewBox="0 0 40 40"><path d="M3 9H7V31H3ZM22 10V30L8 20ZM37 10V30L23 20Z" fill="#26282c"/></svg></button><i></i>
        <button type="button" aria-label="前"><svg viewBox="0 0 40 40"><path d="M18 10V30L3 20ZM20 10h4v20h-4ZM27 10h4v20h-4ZM34 10h4v20h-4Z" fill="#26282c"/></svg></button>
        <button type="button" aria-label="再生"><svg viewBox="0 0 40 40"><path d="M10 9L30 20 10 31Z" fill="#26282c"/><use href="#fly" x="34" y="32" width="5" height="7"/></svg></button>
        <button type="button" aria-label="次"><svg viewBox="0 0 40 40"><path d="M22 10V30L37 20ZM2 10h4v20h-4ZM9 10h4v20H9ZM16 10h4v20h-4Z" fill="#26282c"/></svg></button><i></i>
        <button type="button" aria-label="末尾"><svg viewBox="0 0 40 40"><path d="M33 9H37V31H33ZM3 10V30L17 20ZM18 10V30L32 20Z" fill="#26282c"/></svg></button>
      </div>
      <div class="t-row">
        <button type="button" aria-label="キーモード"><svg viewBox="0 0 40 40"><path d="M3 10V30M37 10V30" stroke="#333" stroke-width="3"/><path d="M18 10V30L6 20ZM22 10V30L34 20Z" fill="#26282c"/></svg></button>
        <input type="text" value="0" aria-label="現在のフレーム"><button class="spin" type="button" aria-label="フレーム増減"><svg><use href="#updown"/></svg></button>
        <button class="cfg" type="button" aria-label="時間設定"><svg viewBox="0 0 40 40"><rect x="4" y="5" width="26" height="30" fill="#f3f5f8" stroke="#444" stroke-width="2.500"/><rect x="7" y="8" width="14" height="11" fill="#1f5590"/><path d="M22 8h6v11h-6Z" fill="#9fb0c4"/><circle cx="28" cy="28" r="9" fill="#fff" stroke="#444" stroke-width="2.500"/><path d="M28 22v7h5" fill="none" stroke="#333" stroke-width="2"/></svg></button>
      </div>
    </div>
    <div class="navs">
      <button type="button" aria-label="ズーム"><svg viewBox="0 0 44 44"><circle cx="16" cy="17" r="10" fill="#e8f1f6" stroke="#555" stroke-width="2"/><path d="M23 25L31 35" stroke="#444" stroke-width="4"/><path d="M29 12H39M34 6V18M30 22H38" stroke="#333" stroke-width="2"/></svg></button>
      <button type="button" aria-label="すべてズーム"><svg viewBox="0 0 44 44"><path d="M5 7H36V34H5ZM20 7V34M5 20H36" fill="#f4f4f4" stroke="#555" stroke-width="2.500"/><circle cx="26" cy="25" r="7" fill="#e8f1f6" stroke="#555" stroke-width="2.500"/><path d="M31 31L38 38" stroke="#333" stroke-width="3"/></svg></button>
      <button type="button" aria-label="全体表示"><svg viewBox="0 0 44 44"><path d="M3 12V5H10M32 5H38V12M3 30V38H10" fill="none" stroke="#333" stroke-width="2.500"/><path d="M11 17L16 11H31V26L26 32H11ZM11 17H26V32M26 17L31 11" fill="#86ad72" stroke="#2f4a26" stroke-width="2"/><use href="#fly" x="36" y="33" width="6" height="7"/></svg></button>
      <button type="button" aria-label="選択を全体表示"><svg viewBox="0 0 44 44"><path d="M12 5H38V29H12ZM25 5V29M12 17H38" fill="#f4f4f4" stroke="#444" stroke-width="2.500"/><path d="M5 22L10 16H24V32L19 38H5ZM5 22H19V38M19 22L24 16" fill="#86ad72" stroke="#2f4a26" stroke-width="2"/><use href="#fly" x="38" y="33" width="6" height="7"/></svg></button>
      <button type="button" aria-label="領域ズーム"><svg viewBox="0 0 44 44"><path d="M5 5H26V32H5Z" fill="none" stroke="#333" stroke-width="2.500" stroke-dasharray="4 3"/><circle cx="27" cy="27" r="8" fill="#e8f1f6" stroke="#555" stroke-width="2.500"/><path d="M32 33L38 40" stroke="#333" stroke-width="4"/></svg></button>
      <button type="button" aria-label="パン"><svg viewBox="0 0 44 44"><path d="M14 36C8 28 6 24 4 20 7 17 10 20 13 24V9C13 6 17 6 17 9V18 6C17 3 21 3 21 6V18 7C22 4 26 4 26 8V19 11C27 8 31 9 31 12L30 26C30 32 28 34 26 38Z" fill="#fff" stroke="#444" stroke-width="2"/><use href="#fly" x="37" y="34" width="6" height="7"/></svg></button>
      <button type="button" aria-label="軌道"><svg viewBox="0 0 44 44"><circle cx="20" cy="22" r="9" fill="#a9cf9a" stroke="#444" stroke-width="2"/><path d="M20 22V4M16 8l4-5 4 5M20 24H36M32 20l5 4-5 4M18 24L4 36M4 29V37H11" fill="none" stroke="#222" stroke-width="2"/><use href="#fly" x="36" y="34" width="6" height="7"/></svg></button>
      <button type="button" aria-label="最大化"><svg viewBox="0 0 44 44"><path d="M22 18H37V38H22Z" fill="#fff" stroke="#444" stroke-width="3"/><rect x="4" y="6" width="26" height="24" fill="#f2f4f6" stroke="#333" stroke-width="3"/><path d="M23 24L11 13M11 20V12H19" fill="none" stroke="#333" stroke-width="2.500"/></svg></button>
    </div>
  </footer>

  <svg class="leaders" viewBox="29 388 4038 2137" aria-hidden="true">
    <g fill="none" stroke-width="6">
      <path d="M3387 1466H3706L3741 1530" stroke="#1d2088"/><circle cx="3758" cy="1559" r="30" stroke="#1d2088"/>
      <path d="M3300 1874H3777L3898 1588" stroke="#006934"/><circle cx="3911" cy="1559" r="30" stroke="#006934"/>
      <path d="M3228 956H3580L3814 1528" stroke="#e60012"/><circle cx="3814" cy="1559" r="30" stroke="#e60012"/>
      <path d="M3300 2070H3785L3970 1590" stroke="#eb6100"/><circle cx="3971" cy="1559" r="30" stroke="#eb6100"/>
    </g>
  </svg>
  <p class="note note-red">②赤色三角形のボタン<br>エッジ ( 線 ) の選択ができます。</p>
  <p class="note note-blue">①赤点 3 つのボタン<br>モデルの頂点を選択できます。<br>これらの選択方法の場合、<br>選択されているもの赤色になります。</p>
  <p class="note note-green">③赤色四角のボタン<br>ポリゴン ( 面 ) の選択ができます。</p>
  <p class="note note-orange">④赤色ボックスのボタン<br>全選択になります。</p>
</main>
</body>
</html>
```
FILE: styles.css
```css
* { box-sizing: border-box; }

body {
  margin: 0;
  min-height: 100vh;
  padding: 388px 29px 389px;
  display: flex;
  background: #fff;
  color: #000;
  font: 22px/30px "Noto Sans", "Noto Sans CJK JP", sans-serif;
}

p, h3, ol, ul, fieldset { margin: 0; padding: 0; }
ol, ul { list-style: none; }
button, input, select { font: inherit; color: inherit; border-radius: 0; margin: 0; padding: 0; }
button { background: none; border: 0; white-space: nowrap; }
svg { display: block; }
.defs { position: absolute; width: 0; height: 0; }

.app {
  position: relative;
  flex: 1;
  min-width: 0;
  display: flex;
  flex-direction: column;
  background: #f0f0f0;
}

/* menu bar */
.menubar {
  display: flex;
  height: 44px;
  border-top: 3px solid #5f5f5f;
  background: linear-gradient(#f1f1f1, #bcbcbc);
}
.logo {
  width: 86px;
  height: 38px;
  margin-top: -3px;
  padding-left: 12px;
  border: 2px solid #222;
  border-top: 0;
  background: linear-gradient(90deg, #a5a5a5, #8b8b8b);
  font: bold 17px/18px "Noto Sans", sans-serif;
  text-align: left;
}
.logo svg { width: 40px; height: 18px; }
.logo span { padding-left: 5px; }
.menus {
  display: grid;
  grid-template-columns: 136px 162px 188px 162px 138px 266px 263px 276px 227px 138px 204px 241px 213px 160px;
  padding-left: 27px;
  font-size: 26px;
  line-height: 37px;
}
.menus a { color: #1a1a1a; text-decoration: none; white-space: nowrap; }
.menus .latin { font-size: 28px; }

/* toolbars */
.toolbars { display: flex; height: 82px; }
.bar {
  display: flex;
  align-items: flex-start;
  padding: 7px 8px 0 0;
  border-top: 2px solid #fff;
  border-right: 2px solid #9a9a9a;
  border-bottom: 2px solid #9a9a9a;
}
.grip {
  width: 6px;
  height: 67px;
  margin: -3px 9px 0 7px;
  border: solid #a0a0a0;
  border-width: 0 2px;
}
.bar-main { padding-right: 6px; }
.bar-main .grip { margin-right: 6px; }
.bar-axis { padding-right: 18px; }
.tool { width: 64px; height: 65px; margin-right: 3px; flex: none; }
.tool svg { width: 64px; height: 64px; overflow: visible; }
.tool.on, .tool.on-amber {
  border: 2px solid #a5a5a5;
  border-right-color: #fff;
  border-bottom-color: #fff;
  background: #bfffbf;
}
.tool.on-amber { background: #edc74f; position: relative; }
.tool.on svg, .tool.on-amber svg { margin: -2px; }
.tool .corner { position: absolute; right: 4px; bottom: 4px; width: 6px; height: 9px; }
.sep { width: 2px; height: 34px; margin: 16px 4px 0 7px; background: #a8a8a8; }
.axis { font: 600 43px/60px "Noto Sans", sans-serif; color: #3c3f48; }
.xy { font-size: 29px; line-height: 62px; color: #3c3f48; padding-left: 4px; }
.glyph { font: 34px "Noto Sans", sans-serif; fill: #3c3f48; }
.glyph-halo { stroke: #fff; stroke-width: 3px; paint-order: stroke; fill: #3a3a7a; }
.glyph-abc { font: bold 15px "Noto Sans", sans-serif; fill: #333; }
.glyph-xy { font: 28px "Noto Sans", sans-serif; fill: #3c3f48; }

/* drop-downs */
.pick { display: block; position: relative; flex: none; }
.pick select {
  appearance: none;
  width: 100%;
  height: 100%;
  padding: 0 0 2px 6px;
  border: 2px solid #6e6e6e;
  border-top-width: 3px;
  border-right-color: #fff;
  border-bottom-color: #fff;
  background: linear-gradient(#efefef, #d6d6d6);
  font-feature-settings: "palt";
}
.pick::after {
  content: "";
  position: absolute;
  right: 8px;
  top: 18px;
  width: 14px;
  height: 8px;
  background: #000;
  clip-path: polygon(0 0, 100% 0, 50% 100%);
}
.w-filter { width: 142px; height: 41px; margin-right: 5px; }
.w-coord { width: 146px; height: 42px; margin-right: 2px; }
.w-sets { width: 250px; height: 42px; margin: 0 4px 0 1px; }
.light select { background: #fff; color: #909090; }

/* workspace */
.workspace { flex: 1; display: flex; }
.rail {
  width: 83px;
  display: flex;
  flex-direction: column;
  background: linear-gradient(90deg, #8c8c8c, #7a7a7a 60%, #505050);
}
.rail-head { height: 21px; background: #f0f0f0; border-right: 2px solid #999; }
.rail-head::before { content: ""; display: block; width: 68px; height: 3px; margin-left: 6px; background: #999; position: relative; top: 7px; }
.rail-play {
  width: 43px;
  height: 42px;
  margin: auto 0 22px 19px;
  border: 2px solid #777;
  border-radius: 5px;
  background: #c9c9c9;
}
.rail-tab {
  height: 94px;
  margin: 0 0 4px 6px;
  padding: 16px 4px 20px 7px;
  border: 2px solid #5c6f7c;
  border-right: 0;
  border-radius: 5px 0 0 5px;
  background: linear-gradient(#b5b9bd, #9cb4c2 40%, #a8dcfb);
}
.rail-tab span { display: block; height: 100%; border: 2px solid #6c7478; border-radius: 3px; background: linear-gradient(#989a9b, #a3a9a7); }

.stage { flex: 1; min-width: 0; display: flex; flex-direction: column; border-bottom: 2px solid #fff; }
.viewport {
  position: relative;
  flex: 1;
  border: solid #fff200;
  border-width: 4px 5px 5px;
  border-bottom-color: #f2eb6a;
  background: linear-gradient(#4d4d4d, #9f9f9f);
  box-shadow: inset 0 -3px #b0a53a;
}
.vp-label { position: relative; padding: 5px 0 0 6px; font-size: 25px; color: #cfcfcf; white-space: nowrap; }
.scene { position: absolute; inset: 0; width: 100%; height: 100%; }
.ax { font: 20px "Noto Sans", sans-serif; }

.slider { display: flex; height: 40px; border-bottom: 2px solid #fff; background: #bdbdbd; line-height: 34px; }
.slider button { width: 33px; height: 36px; background: #f0f0f0; border-bottom: 2px solid #888; }
.slider .thumb { width: 264px; border: solid #000; border-width: 0 3px 3px 0; margin-right: 1px; box-shadow: inset 2px 0 #999; }
.timeline { display: flex; height: 53px; border-top: 2px solid #8a8a8a; }
.curve-btn { width: 110px; background: #f0f0f0; }
.curve-btn svg { width: 38px; height: 36px; margin-left: 27px; }
.ruler {
  flex: 1;
  margin-right: 106px;
  padding: 0 11px 0 9px;
  display: flex;
  background: #c9c9c9;
}
.ruler li {
  position: relative;
  flex: 1;
  background: repeating-linear-gradient(90deg, #808080 0 2px, transparent 2px 20%) 0 0 / 100% 24px no-repeat;
}
.ruler li::before { content: ""; position: absolute; left: 0; top: 0; bottom: 0; width: 2px; background: #808080; }
.ruler .last { flex: 0 0 0; }
.ruler span { position: relative; display: flex; justify-content: center; width: 0; padding-top: 21px; line-height: 30px; }
.ruler .now::before { left: -9px; width: 19px; background: linear-gradient(90deg, #86afc9 8px, #33617f 8px 11px, #86afc9 11px); }

/* command panel */
.panel { width: 385px; padding-top: 7px; border-bottom: 2px solid #9a9a9a; font-feature-settings: "palt"; }
.panel button, .keys button, .kf, .key {
  border: 2px solid #fbfbfb;
  border-right-color: #999;
  border-bottom-color: #999;
  font-feature-settings: "palt";
}
.panel button:disabled, .off { color: #a3a3a3; }
.tabs { display: flex; height: 50px; padding: 2px 0 0 6px; border-bottom: 2px solid #999; }
.tabs button {
  width: 60px;
  height: 48px;
  margin-right: 1px;
  border: 2px solid #999;
  border-bottom: 0;
  border-radius: 7px 7px 0 0;
  background: #fff;
}
.tabs .current { height: 50px; margin-top: -2px; background: #efefef; }
.tabs svg { width: 58px; height: 46px; }
.name-row { display: flex; gap: 9px; margin: 13px 0 0 24px; }
.panel input[type="text"], .status input[type="text"] {
  border: 3px solid #222;
  border-right-color: #fff;
  border-bottom-color: #fff;
  background: #fff;
}
.name-row input { width: 306px; height: 41px; padding-left: 4px; }
.panel .swatch-name { width: 34px; height: 41px; border: 2px solid #bbb; border-right: 0; border-bottom: 0; background: linear-gradient(#000 17px, #fff 17px); }
.w-mod { width: 345px; height: 52px; margin: 12px 0 0 24px; }
.w-mod select { background: #fff; }
.w-mod::after { top: 24px; right: 10px; }
.mods { display: grid; grid-template-columns: 149px 149px; grid-auto-rows: 42px; gap: 6px 9px; margin: 11px 0 0 37px; }
.stack { width: 340px; height: 200px; margin: 18px 0 0 24px; padding-top: 2px; border: 3px solid #858585; background: #fff; }
.stack li { display: flex; align-items: center; height: 34px; margin-right: 2px; padding-left: 15px; border-bottom: 2px solid #858585; }
.stack .sel { height: 32px; background: #737373; border: 0; }
.lamp { width: 24px; height: 30px; }
.plus { width: 20px; height: 20px; margin: 0 12px 0 15px; }
.stack .base { padding-left: 46px; }
.stack-tools { display: flex; margin: 9px 0 0 24px; }
.stack-tools button { width: 48px; height: 48px; border: 0; }
.stack-tools button svg { width: 100%; height: 100%; }
.stack-tools .pressed { width: 50px; border: 2px solid #999; border-right-color: #fff; border-bottom-color: #fff; }
.stack-tools i { width: 2px; height: 34px; margin: 7px 10px 0 15px; background: #aaa; }
.divider { width: 366px; height: 3px; margin: 26px 0 0 10px; border: 0; background: #111; }

.rollouts { display: flex; margin: 16px 0 0 10px; }
.rolls { width: 354px; border-top: 2px solid #a0a0a0; border-bottom: 4px solid #fff; }
.scroll { width: 8px; background: linear-gradient(#9b9b9b 554px, #000 554px); padding-top: 264px; }
.scroll i { display: block; height: 20px; background: repeating-linear-gradient(#fff 0 2px, #9b9b9b 2px 5px); }
.rollout { margin: 32px 5px 0 3px; padding-bottom: 11px; border: 2px solid #a5a5a5; }
.rollout:first-child { margin-top: 26px; }
.rollout h3 {
  position: relative;
  height: 34px;
  margin: -20px 3px 0 8px;
  border: 2px solid #fbfbfb;
  border-right-color: #999;
  border-bottom-color: #999;
  background: #f0f0f0;
  font: inherit;
  text-align: center;
}
.rollout h3 span { position: absolute; left: 8px; }
.rollout label { display: flex; align-items: center; white-space: nowrap; }
.rollout input[type="radio"] {
  appearance: none;
  width: 20px;
  height: 20px;
  margin-right: 14px;
  border: 3px solid #858585;
  border-right-color: #f8f8f8;
  border-bottom-color: #f8f8f8;
  border-radius: 50%;
  background: #fff;
}
.rollout input[type="radio"]:checked { background: radial-gradient(circle, #000 5px, #fff 6px); }
.rollout input[type="checkbox"] {
  appearance: none;
  width: 24px;
  height: 24px;
  margin-right: 12px;
  border: 3px solid #808080;
  border-right-color: #fafafa;
  border-bottom-color: #fafafa;
  background: #f0f0f0;
}
.rollout .uv input[type="checkbox"] { background: #fff; }
.line { display: flex; height: 30px; }
.two { margin: 10px 0 0 31px; }
.two label:first-child { width: 155px; }
.op { margin-top: 10px; font-size: 24px; text-align: center; }
.acts { display: flex; justify-content: center; margin-top: 8px; }
.acts button { width: 135px; height: 37px; line-height: 30px; }
.pair { margin-top: 17px; gap: 21px; }
.cage { height: 33px; margin: 7px 0 0 26px; gap: 9px; align-items: center; }
.cage label { width: 205px; }
.panel .chip { width: 36px; height: 33px; border: 2px solid #111; }
.panel .amber { background: #fdb913; }
.panel .yellow { background: #fff000; }

.subs { display: flex; gap: 16px; margin: 15px 0 0 50px; }
.panel .subs button { width: 34px; height: 30px; border: 0; }
.subs svg { width: 34px; height: 30px; }
.checks { display: flex; flex-direction: column; gap: 11px; margin: 22px 0 0 22px; }
.checks > * { height: 30px; }
.angle { display: flex; }
.angle label { width: 139px; }
.angle input[type="text"] { width: 139px; color: #a3a3a3; padding-left: 4px; }
.panel .spin { width: 24px; height: 31px; }
.spin svg { width: 20px; height: 27px; }
.angle .spin { margin-left: 6px; }
.grid-a, .grid-b, .grid-c { display: grid; margin: 11px 14px 0 16px; grid-auto-rows: 37px; line-height: 30px; }
.grid-a { grid-template-columns: 149px 150px; gap: 13px; margin-top: 9px; }
.grid-b { grid-template-columns: 124px 24px 118px 24px; column-gap: 6px; align-items: center; }
.grid-b > :not(.spin) { height: 37px; }
fieldset { border: 2px solid #a5a5a5; }
legend { height: 28px; line-height: 28px; margin-left: -14px; padding: 0 6px; }
.preview { margin: 7px 1px 0 2px; padding: 10px 0 9px 25px; display: grid; grid-template-columns: 107px 1fr; gap: 5px 0; }
.preview label, .constraint label { height: 30px; }
.whole { margin: 5px 16px 22px 0; text-align: right; }
.closed { height: 18px; margin-top: 25px; padding: 0; }
.closed h3 { margin-top: -12px; }
.open-end { margin-top: 33px; border-bottom: 0; padding-bottom: 12px; }
.repeat { margin-top: 9px; }
.constraint { margin: 2px 4px 0 6px; padding: 6px 0 12px 25px; display: grid; grid-template-columns: 127px 1fr; gap: 8px 0; }
.uv { display: flex; height: 36px; margin: 16px 0 0 38px; }
.uv label { width: 193px; }
.uv button { width: 30px; height: 36px; }
.uv svg { width: 26px; height: 32px; }

/* status bar */
.status { display: flex; height: 104px; padding-top: 5px; font-feature-settings: "palt"; }
.listener { width: 220px; padding-left: 4px; border-right: 2px solid #999; }
.pink { width: 199px; height: 46px; border: 2px solid #8a8a8a; border-top-width: 4px; border-right: 0; border-bottom-color: #fff; background: #dcc3c4; }
.status .listener input { width: 199px; height: 46px; margin-top: 2px; padding: 0 0 5px 9px; border: 2px solid #777; border-top-width: 4px; border-right: 0; border-bottom-color: #fff; font-size: 23px; }
.info { flex: 1; min-width: 0; display: flex; flex-direction: column; gap: 7px; padding: 2px 0 0 6px; }
.info-row { display: flex; height: 45px; }
.msg { flex: 1; }
.msg, .cell {
  padding: 5px 0 0 9px;
  border: 2px solid #a0a0a0;
  border-right-color: #fff;
  border-bottom-color: #fff;
  white-space: nowrap;
}
.cell { width: 208px; }
.coords { display: flex; align-items: flex-start; width: 738px; padding-left: 12px; }
.coords svg { width: 34px; height: 34px; margin: 5px 20px 0 0; }
.coords label { display: flex; align-items: center; justify-content: space-between; width: 160px; height: 44px; margin-right: 27px; }
.coords svg + label { margin-left: -4px; }
.coords label input { width: 119px; height: 44px; }
.iso { width: 46px; height: 47px; margin: -2px 6px 0 7px; border: 2px solid #a88; background: #edc74f; }
.iso svg { width: 42px; height: 42px; }
.key { width: 91px; height: 92px; margin-left: 11px; }
.key svg { width: 62px; height: 42px; margin: 0 auto; }
.keys { display: flex; flex-direction: column; gap: 2px; margin-left: 8px; }
.keys button { width: 135px; height: 46px; }
.filters { width: 243px; margin-left: 8px; }
.w-sel { width: 239px; height: 42px; margin-top: 2px; }
.filters div { display: flex; margin-top: 4px; }
.bare { width: 55px; }
.bare svg { width: 44px; height: 44px; margin-left: 4px; }
.kf { width: 188px; height: 46px; }
.transport { width: 266px; margin-left: 16px; padding-left: 4px; }
.t-row { display: flex; align-items: center; height: 47px; }
.t-row svg { width: 38px; height: 38px; }
.t-row > button { width: 38px; margin-right: 10px; }
.t-row i { width: 2px; height: 34px; margin-right: 5px; background: #aaa; }
.status .t-row input { width: 131px; height: 42px; margin-left: 4px; padding-left: 4px; }
.t-row .spin { width: 24px; height: 34px; margin: 0 8px 0 5px; border-right: 2px solid #999; border-bottom: 2px solid #999; }
.t-row .spin svg { width: 22px; height: 30px; }
.t-row > .cfg { margin-right: 0; }
.navs { display: grid; grid-template-columns: repeat(4, 49px); grid-auto-rows: 46px; margin: 1px 0 0 -1px; }
.navs svg { width: 44px; height: 44px; }

/* tutorial callouts over the whole window */
.leaders { position: absolute; inset: 0; width: 100%; height: 100%; pointer-events: none; }
.note {
  position: absolute;
  font: 350 41px/71px "Noto Sans CJK JP", sans-serif;
  white-space: nowrap;
  pointer-events: none;
}
.note-red { left: 2758px; top: 528px; color: #e60012; }
.note-blue { left: 2758px; top: 957px; color: #1d2088; }
.note-green { left: 2648px; top: 1374px; color: #006934; }
.note-orange { left: 2779px; top: 1638px; color: #eb6100; }
```
